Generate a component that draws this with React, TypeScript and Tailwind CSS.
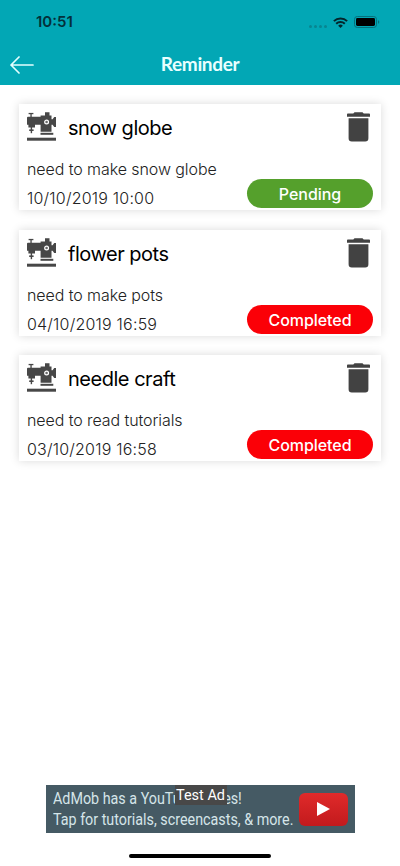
import React from 'react';

interface Reminder {
  title: string;
  note: string;
  date: string;
  status: 'Pending' | 'Completed';
}

const reminders: Reminder[] = [
  { title: 'snow globe', note: 'need to make snow globe', date: '10/10/2019 10:00', status: 'Pending' },
  { title: 'flower pots', note: 'need to make pots', date: '04/10/2019 16:59', status: 'Completed' },
  { title: 'needle craft', note: 'need to read tutorials', date: '03/10/2019 16:58', status: 'Completed' },
];

function WifiIcon() {
  return (
    <svg className="w-[15px] h-[11px]" viewBox="0 0 15 11" fill="none" stroke="#04252b" strokeWidth="2">
      <path d="M0.9 4.1a9.4 9.4 0 0 1 13.2 0" />
      <path d="M3.2 6.7a6.1 6.1 0 0 1 8.6 0" />
      <path d="M7.5 10.9 5.2 8.7a3.3 3.3 0 0 1 4.6 0z" fill="#04252b" stroke="none" />
    </svg>
  );
}

function BatteryIcon() {
  return (
    <svg className="w-[26px] h-3" viewBox="0 0 26 12" fill="none">
      <rect x="0.5" y="0.5" width="22" height="11" rx="2.8" stroke="#05717c" />
      <rect x="2" y="2" width="19" height="8" rx="1.4" fill="#000" />
      <path d="M24 4.2v3.6c.8-.2 1.3-1 1.3-1.8s-.5-1.6-1.3-1.8z" fill="#05717c" />
    </svg>
  );
}

function SewingMachineIcon() {
  return (
    <svg className="w-[29px] h-[29px] shrink-0" viewBox="0 0 29 29" fill="#474747">
      {/* Thread guide, arm and needle */}
      <rect x="1.6" y="0.9" width="4.8" height="1.3" />
      <rect x="3.4" y="2" width="1.3" height="4" />
      <path d="M1 4.8h14v8H8v2.6H1.4v-2.6H0v-7q0-1 1-1z" />
      <rect x="3.7" y="15" width="1.4" height="6.2" />
      <rect x="2.2" y="17.4" width="4.4" height="1.6" />
      {/* Pillar and hand wheel */}
      <path d="M18 0.2h4.5v3.4h2v16.2H13.6V3.6H18z" />
      <path d="M24 7.2h1.6L27.2 5H29v10h-1.8l-1.6-2.300H24z" />
      <circle cx="19.6" cy="10" r="1.9" fill="#6a6a6a" stroke="#fff" strokeWidth="1.2" />
      {/* Base */}
      <rect x="13.5" y="20.800" width="12.800" height="2" />
      <rect x="0" y="25.700" width="29" height="3" />
    </svg>
  );
}

function TrashIcon() {
  return (
    <svg className="w-[23px] h-[30px]" viewBox="0 0 23 30" fill="#424242">
      <path d="M0.8 1.6H6.3L7.5 0.3h8L16.7 1.6h5.5q.8 0 .8.8V4.700H0V2.400q0-.8.800-.8z" />
      <path d="M1.600 6.200h19.800v20q0 3.200-3.200 3.200H4.800q-3.200 0-3.200-3.200z" />
    </svg>
  );
}

function ReminderCard({ reminder }: { reminder: Reminder }) {
  const done = reminder.status === 'Completed';

  return (
    <article className="h-[106px] bg-white px-2 shadow-[0_0_9px_rgba(0,0,0,0.15)]">
      <div className="flex h-[50px] items-start pt-2">
        <SewingMachineIcon />
        <h2 className="ml-[12px] flex-1 text-[20px] leading-[32px] tracking-[-0.48px] text-black">{reminder.title}</h2>
        <button aria-label="Delete" className="mr-[3px]">
          <TrashIcon />
        </button>
      </div>
      <p className="h-[29px] text-[16px] font-light leading-[30px] tracking-[-0.08px] text-[#222]">{reminder.note}</p>
      <div className="flex h-[29px] justify-between">
        <time className="text-[16px] font-light leading-[30px] tracking-[0.2px] text-[#222]">{reminder.date}</time>
        <span
          className={`-mt-[4px] h-[29px] w-[126px] rounded-full text-center text-[16px] font-medium leading-[30px] tracking-[-0.05px] text-white ${
            done ? 'bg-[#fb0007]' : 'bg-[#55a02c]'
          }`}
        >
          {reminder.status}
        </span>
      </div>
    </article>
  );
}

export default function App() {
  return (
    <div className="flex h-[866px] w-[400px] flex-col overflow-hidden bg-white font-['Inter',sans-serif]">
      <header className="h-[85px] shrink-0 bg-[#02a7b5]">
        {/* Status bar */}
        <div className="flex h-[44px] items-center justify-between pl-9 pr-[20px]">
          <span className="text-[15px] font-semibold text-[#04303a]">10:51</span>
          <div className="flex items-center">
            <div className="mr-[6px] mt-[8px] flex gap-[2px]">
              {[0, 1, 2, 3].map((dot) => (
                <span key={dot} className="size-[3px] rounded-full bg-[#088591]" />
              ))}
            </div>
            <WifiIcon />
            <div className="ml-[6px]">
              <BatteryIcon />
            </div>
          </div>
        </div>
        {/* Title bar */}
        <div className="flex h-[41px] items-center justify-between px-[10px]">
          <button aria-label="Back">
            <svg className="w-6 h-[18px]" viewBox="0 0 24 18" fill="none" stroke="#e4ffff" strokeWidth="1.7" strokeLinecap="round" strokeLinejoin="round">
              <path d="M9 1 1 9l8 8M1 9h22" />
            </svg>
          </button>
          <h1 className="font-['Lato',sans-serif] text-[19px] font-bold tracking-[-0.35px] text-[#e9ffff]">Reminder</h1>
          <div className="w-6" />
        </div>
      </header>

      <main className="flex flex-1 flex-col gap-[19.6px] px-[19px] pt-[19.2px]">
        {reminders.map((reminder) => (
          <ReminderCard key={reminder.title} reminder={reminder} />
        ))}
      </main>

      <footer className="flex h-[81px] shrink-0 flex-col items-center">
        <div className="relative flex h-12 w-[309px] items-center bg-[#455a64] pl-[7.5px] pr-[6.5px] font-['Roboto',sans-serif] text-[#d5e5e9]">
          <div className="w-[240px] origin-left scale-x-[0.895] whitespace-nowrap pt-px text-[16px] leading-[20.5px]">
            <p>AdMob has a YouTube series!</p>
            <p>Tap for tutorials, screencasts, &amp; more.</p>
          </div>
          <span className="ml-auto flex h-[33px] w-[49px] items-center justify-center rounded-[6px] bg-linear-to-b from-[#e02a2a] to-[#c21a1d]">
            <svg className="w-[13px] h-[14px]" viewBox="0 0 13 14" fill="#fff">
              <path d="M0 0 13 7 0 14z" />
            </svg>
          </span>
          <span className="absolute left-[129px] top-0 h-[20px] w-[52px] whitespace-nowrap bg-[#484848] text-center text-[14.5px] leading-[22px] text-white">
            Test Ad
          </span>
        </div>
        <div className="mt-[21px] h-[4px] w-[142px] rounded-full bg-black" />
      </footer>
    </div>
  );
}
